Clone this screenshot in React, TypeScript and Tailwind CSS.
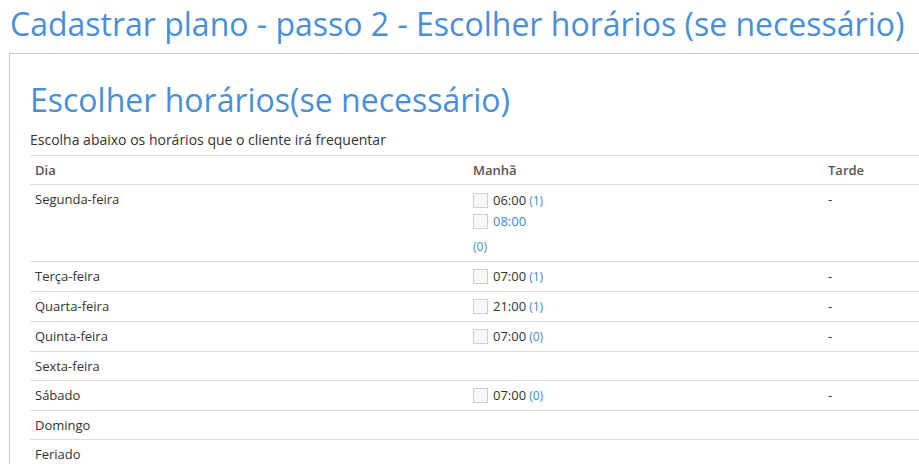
const rows: { day: string; slots: { time: string; count?: string; linked?: boolean }[]; extra?: string; tarde: boolean }[] = [
  {
    day: "Segunda-feira",
    slots: [{ time: "06:00", count: "(1)" }, { time: "08:00", linked: true }],
    extra: "(0)",
    tarde: true,
  },
  { day: "Terça-feira", slots: [{ time: "07:00", count: "(1)" }], tarde: true },
  { day: "Quarta-feira", slots: [{ time: "21:00", count: "(1)" }], tarde: true },
  { day: "Quinta-feira", slots: [{ time: "07:00", count: "(0)" }], tarde: true },
  { day: "Sexta-feira", slots: [], tarde: false },
  { day: "Sábado", slots: [{ time: "07:00", count: "(0)" }], tarde: true },
  { day: "Domingo", slots: [], tarde: false },
  { day: "Feriado", slots: [], tarde: false },
]

function Box() {
  return <span className="inline-block w-[15px] h-[15px] border border-[#cfcfcf] bg-[#f7f7f7] mr-[5px] shrink-0" />
}

export default function App() {
  return (
    <div className="w-[919px] h-[464px] overflow-hidden bg-white text-[#333] font-['Open_Sans',sans-serif] text-[13px]">
      <h1 className="pl-[10px] pt-[1px] text-[32px] leading-[46px] text-[#4a8fd6] whitespace-nowrap">
        Cadastrar plano - passo 2 - Escolher horários (se necessário)
      </h1>

      <div className="ml-[9px] mt-[6px] w-[1100px] border-l border-t border-[#cccccc] pl-[20px] pt-[26px]">
        <h2 className="text-[32px] leading-[40px] text-[#4a8fd6]">Escolher horários(se necessário)</h2>
        <p className="mt-[10px] text-[14px] leading-[20px] text-[#333]">Escolha abaixo os horários que o cliente irá frequentar</p>

        <table className="mt-[5px] border-collapse text-left">
          <thead>
            <tr className="border-t border-[#dddddd]">
              <th className="w-[438px] px-[5px] py-[5px] font-semibold text-[#555] leading-[18px]">Dia</th>
              <th className="w-[355px] px-[5px] py-[5px] font-semibold text-[#555] leading-[18px]">Manhã</th>
              <th className="w-[240px] px-[5px] py-[5px] font-semibold text-[#555] leading-[18px]">Tarde</th>
            </tr>
          </thead>
          <tbody>
            {rows.map((r) => (
              <tr key={r.day} className="border-t border-[#dddddd] align-top">
                <td className="px-[5px] py-[5px] leading-[18px]">{r.day}</td>
                <td className="px-[5px] py-[5px] leading-[19px]">
                  {r.slots.map((s) => (
                    <div key={s.time} className={`flex items-center ${r.extra ? "h-[21px]" : "h-[19px]"}`}>
                      <Box />
                      <span className={s.linked ? "text-[#3b8bd0]" : "text-[#333]"}>{s.time}</span>
                      {s.count && <span className="ml-[3px] text-[12px] text-[#3b8bd0]">{s.count}</span>}
                    </div>
                  ))}
                  {r.extra && <div className="mt-[6px] text-[12px] leading-[18px] text-[#3b8bd0]">{r.extra}</div>}
                </td>
                <td className="px-[5px] py-[5px] leading-[18px]">{r.tarde ? "-" : ""}</td>
              </tr>
            ))}
          </tbody>
        </table>
      </div>
    </div>
  )
}
